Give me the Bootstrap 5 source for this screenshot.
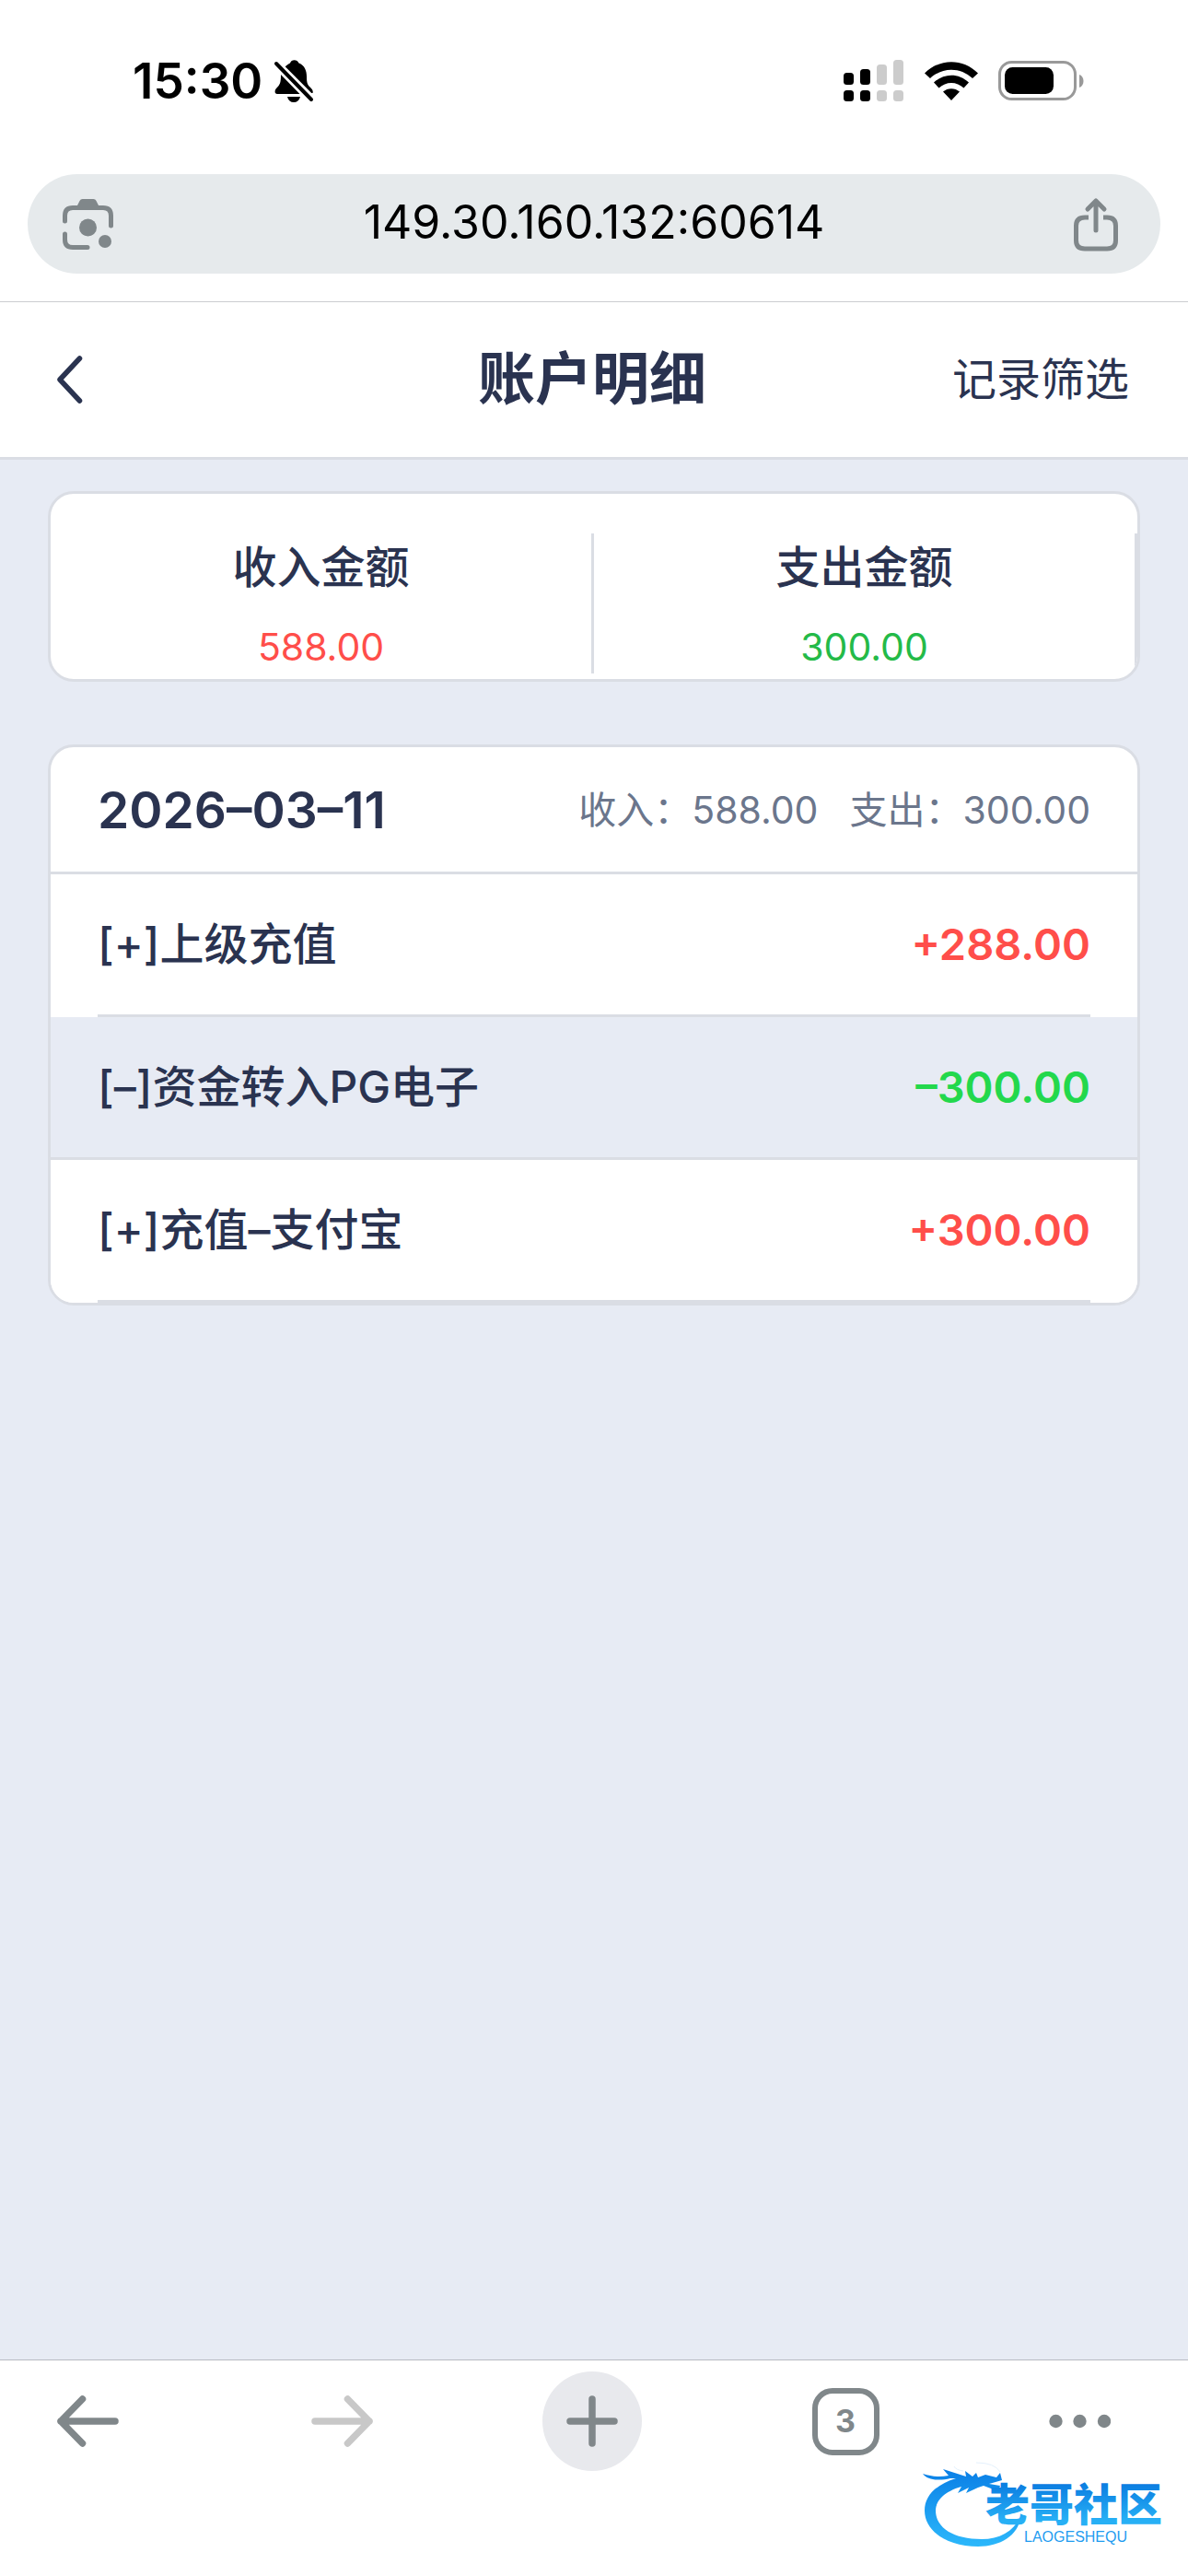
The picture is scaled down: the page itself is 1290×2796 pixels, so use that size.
<!DOCTYPE html>
<html lang="zh-CN">
<head>
<meta charset="utf-8">
<meta name="viewport" content="width=device-width, initial-scale=1">
<title>账户明细</title>
<link rel="stylesheet" href="https://cdn.jsdelivr.net/npm/bootstrap@5.3.0/dist/css/bootstrap.min.css">
<style>
  :root { --ink: #2a3350; --line: #dadde4; --page: #e7ebf4; --icon: #80878a; --red: #ff4e4a; }
  body { font-family: Inter, "Noto Sans CJK SC", sans-serif; color: var(--ink); background: #fff; font-size: 48px; line-height: 60px; }
  svg { display: block; flex: none; }
  .status-bar { height: 172px; padding: 4px 113px 0 144px; color: #000; }
  .status-time { font-size: 53px; font-weight: 600; }
  .status-left { gap: 12px; }
  .status-right { gap: 22px; }
  .address-wrap { padding: 17px 30px 30px; border-bottom: 1px solid #cccdd0; }
  .address-pill { height: 108px; padding: 0 43px 0 38px; background: #e6eaec; color: var(--icon); }
  .address-pill input { min-width: 0; padding: 0 0 4px; background: transparent; font-size: 50px; line-height: 60px; color: #000; outline: 0; }
  .page-head { height: 171px; padding: 0 64px 0 60px; border-bottom: 3px solid var(--line); }
  .page-title { font-size: 62px; line-height: 72px; font-weight: 700; }
  .side-slot { flex: 1 1 0; }
  .side-slot a { color: var(--ink); }
  .icon-btn { padding: 0; border: 0; background: none; color: var(--icon); }
  .page-main { background: var(--page); padding: 34px 52px; }
  .panel { border: 3px solid var(--line); border-radius: 28px; overflow: hidden; color: var(--ink); }
  .totals { padding: 43px 0 6px; height: 201px; }
  .total-cell { border-right: 3px solid var(--line); padding-top: 7px; }
  .total-label { font-weight: 500; line-height: 60px; }
  .total-value { font-size: 41px; line-height: 50px; margin-top: 31px; }
  .text-in { color: var(--red); }
  .text-out { color: #24ba48; }
  .day-panel { margin-top: 68px; }
  .day-head { height: 138px; padding: 0 51px; border-bottom: 3px solid var(--line); }
  .day-date { font-size: 55px; font-weight: 600; }
  .day-sum { font-size: 41px; color: #6b768c; gap: 34px; }
  .entry { --inset: 51px; padding: 0 var(--inset); background: #fff; }
  .entry-line { height: 155px; border-bottom: 3px solid var(--line); font-weight: 500; }
  .entry-alt { padding: 0; background: var(--page); }
  .entry-alt .entry-line { padding: 0 var(--inset); }
  .entry-amount { font-size: 47px; font-weight: 600; }
  .entry-alt .entry-amount { color: #23d84c; }
  .tool-bar { height: 235px; padding: 11px 84px 0 62px; border-top: 1px solid #b8bac2; }
  .tool-row { height: 110px; }
  .back-btn { width: 91px; }
  .plus-btn { width: 108px; height: 108px; background: #e8e9ed; }
  .tabs-btn { width: 73px; height: 73px; border: 6px solid var(--icon); border-radius: 22px; font-size: 34px; line-height: 40px; font-weight: 700; }
  .site-mark { right: 18px; bottom: 28px; width: 270px; height: 96px; }
</style>
<script src="https://cdn.jsdelivr.net/npm/bootstrap@5.3.0/dist/js/bootstrap.bundle.min.js"></script>
</head>
<body class="d-flex flex-column min-vh-100 position-relative">

<div class="status-bar d-flex align-items-center justify-content-between">
  <div class="status-left d-flex align-items-center">
    <span class="status-time">15:30</span>
    <svg width="44" height="48" viewBox="0 0 44 48" role="img" aria-label="静音">
      <path d="M13 8C15 6 17 5 18 4.500C19 0 26 0 27.500 4.500C34 7 36 13 36 19C36 27 37 28 41 32C43 34 43 36 42.500 37H37L11 11.500C11 10 12 9 13 8Z" fill="currentColor"/>
      <path d="M8 17L28.500 38H4C1 38 1 34 3 32C7 28 8 26 8 17ZM15 41H29C28 45 25.500 47 22 47S16 45 15 41Z" fill="currentColor"/>
      <path d="M3 5L42 44" stroke="#fff" stroke-width="9"/>
      <path d="M3 5L41 44" stroke="currentColor" stroke-width="4" stroke-linecap="round"/>
    </svg>
  </div>
  <div class="status-right d-flex align-items-center">
    <svg width="66" height="46" viewBox="0 0 66 46" aria-hidden="true">
      <g fill="currentColor"><rect y="14" width="11" height="13" rx="3.500"/><rect y="33" width="11" height="12" rx="3.500"/><rect x="18" y="10" width="11" height="17" rx="3.500"/><rect x="18" y="33" width="11" height="12" rx="3.500"/></g>
      <g fill="#ccc"><rect x="36" y="5" width="11" height="22" rx="3.500"/><rect x="36" y="33" width="11" height="12" rx="3.500"/><rect x="54" width="11" height="27" rx="3.500"/><rect x="54" y="33" width="11" height="12" rx="3.500"/></g>
    </svg>
    <svg width="58" height="42" viewBox="0 0 58 42" aria-hidden="true">
      <path d="M0 12.500C16-4 42-4 58 12.500L52 18C39 5.500 19 5.500 6 18ZM10 22.500C21 12 37 12 48 22.500L42.500 28.500C35 21 23 21 15.500 28.500ZM20 32.500C25 28 33 28 38 32.500L29 42Z" fill="currentColor"/>
    </svg>
    <svg width="93" height="44" viewBox="0 0 93 44" aria-hidden="true">
      <rect x="1.500" y="1.500" width="82" height="40" rx="13" fill="none" stroke="#999" stroke-width="3"/>
      <rect x="7" y="7" width="53" height="29" rx="8.500" fill="currentColor"/>
      <path d="M88 15C94 17 94 27 88 29Z" fill="#999"/>
    </svg>
  </div>
</div>

<div class="address-wrap">
  <div class="address-pill rounded-pill d-flex align-items-center">
    <button class="icon-btn" type="button" aria-label="相机搜索">
      <svg width="59" height="58" viewBox="0 0 59 58"><g fill="none" stroke="currentColor" stroke-width="5" stroke-linecap="round"><path d="M2.500 26V20Q2.500 11.500 11 11.500H44Q52.500 11.500 52.500 20V31M2.500 40V46Q2.500 54.500 11 54.500H27"/></g><path d="M15 11L18.500 4Q19.500 2 21.500 2H33.500Q35.500 2 36.500 4L40 11Z" fill="currentColor"/><circle cx="27.500" cy="33" r="9.500" fill="currentColor"/><circle cx="46" cy="48" r="7" fill="currentColor"/></svg>
    </button>
    <input class="flex-fill border-0 text-center" type="text" value="149.30.160.132:60614" aria-label="网址">
    <button class="icon-btn" type="button" aria-label="分享">
      <svg width="54" height="60" viewBox="0 0 54 60"><g fill="none" stroke="currentColor" stroke-width="5" stroke-linecap="round" stroke-linejoin="round"><path d="M27 37V6M18 14L27 5L36 14"/><path stroke-linecap="butt" d="M19 23H15Q5.500 23 5.500 32V48Q5.500 57 15 57H39Q48.500 57 48.500 48V32Q48.500 23 39 23H35"/></g></svg>
    </button>
  </div>
</div>

<header class="page-head d-flex align-items-center">
  <div class="side-slot d-flex">
    <button class="icon-btn" type="button" aria-label="返回">
      <svg width="32" height="52" viewBox="0 0 32 52"><path d="M26.500 3L5 26L26.500 49" fill="none" stroke="#2a3350" stroke-width="5.500" stroke-linecap="round" stroke-linejoin="round"/></svg>
    </button>
  </div>
  <h1 class="page-title mb-0">账户明细</h1>
  <div class="side-slot text-end"><a class="text-decoration-none" href="#">记录筛选</a></div>
</header>

<main class="page-main flex-grow-1">
  <section class="card panel">
    <div class="totals d-flex text-center">
      <div class="total-cell flex-fill w-50">
        <div class="total-label">收入金额</div>
        <div class="total-value text-in">588.00</div>
      </div>
      <div class="total-cell flex-fill w-50">
        <div class="total-label">支出金额</div>
        <div class="total-value text-out">300.00</div>
      </div>
    </div>
  </section>

  <section class="card panel day-panel">
    <div class="day-head d-flex align-items-center justify-content-between">
      <h2 class="day-date mb-0">2026–03–11</h2>
      <div class="day-sum d-flex"><span>收入：588.00</span><span>支出：300.00</span></div>
    </div>
    <ul class="list-unstyled mb-0">
      <li class="entry"><div class="entry-line d-flex align-items-center justify-content-between"><span>[+]上级充值</span><span class="entry-amount text-in">+288.00</span></div></li>
      <li class="entry entry-alt"><div class="entry-line d-flex align-items-center justify-content-between"><span>[–]资金转入PG电子</span><span class="entry-amount">–300.00</span></div></li>
      <li class="entry"><div class="entry-line d-flex align-items-center justify-content-between"><span>[+]充值–支付宝</span><span class="entry-amount text-in">+300.00</span></div></li>
    </ul>
  </section>
</main>

<nav class="tool-bar bg-white" aria-label="浏览器工具栏">
  <div class="tool-row d-flex align-items-center justify-content-between">
    <button class="icon-btn back-btn" type="button" aria-label="后退"><svg width="67" height="56" viewBox="0 0 67 56"><path d="M63 28H4M27.500 4L4 28L27.500 52" fill="none" stroke="currentColor" stroke-width="7.500" stroke-linecap="round" stroke-linejoin="round"/></svg></button>
    <button class="icon-btn" type="button" aria-label="前进"><svg width="67" height="56" viewBox="0 0 67 56"><path d="M4 28H63M39.500 4L63 28L39.500 52" fill="none" stroke="#c8c8c8" stroke-width="7.500" stroke-linecap="round" stroke-linejoin="round"/></svg></button>
    <button class="icon-btn plus-btn rounded-circle d-flex align-items-center justify-content-center" type="button" aria-label="新标签页"><svg width="56" height="56" viewBox="0 0 56 56"><path d="M4 28H52M28 4V52" stroke="currentColor" stroke-width="7.500" stroke-linecap="round"/></svg></button>
    <button class="icon-btn tabs-btn" type="button" aria-label="3 个标签页">3</button>
    <button class="icon-btn" type="button" aria-label="更多"><svg width="67" height="16" viewBox="0 0 67 16" fill="currentColor"><circle cx="7.500" cy="8" r="7.200"/><circle cx="33.500" cy="8" r="7.200"/><circle cx="60" cy="8" r="7.200"/></svg></button>
  </div>
</nav>

<svg class="site-mark position-absolute" viewBox="0 0 270 96" role="img" aria-label="老哥社区">
  <defs>
    <linearGradient id="ring" x1="0" y1="0" x2="0" y2="1"><stop offset="0" stop-color="#0a7fe6"/><stop offset="1" stop-color="#2cb8fb"/></linearGradient>
    <linearGradient id="word" x1="0" y1="0" x2="0" y2="1"><stop offset=".25" stop-color="#0c7fe2"/><stop offset=".8" stop-color="#27b0f5"/></linearGradient>
  </defs>
  <g fill="url(#ring)">
    <path d="M36 18C14 25 2 37 2 53C2 75 26 92 60 92C84 92 104 80 106 60C98 76 83 84 64 84C34 84 14 72 14 53C14 42 24 32 42 27L38 34L50 28L47 34L60 28L66 26L82 32L84 26L72 24L86 20L84 12L80 17L68 14L60 17L58 12L54 16L46 10L47 16L22 8L28 15C18 17 10 16 0 13C5 20 18 21 30 18Z"/>
  </g>
  <path d="M34 5Q36 9 44 10M58 1Q78 1 84 11" fill="none" stroke="#e4f1fc" stroke-width="1"/>
  <text x="68" y="64" font-family="Noto Sans CJK SC, sans-serif" font-weight="900" font-size="48" fill="url(#word)">老哥社区</text>
  <text x="110" y="87" font-family="Liberation Sans, sans-serif" font-size="16" fill="#1f9cf0">LAOGESHEQU</text>
</svg>
</body>
</html>
